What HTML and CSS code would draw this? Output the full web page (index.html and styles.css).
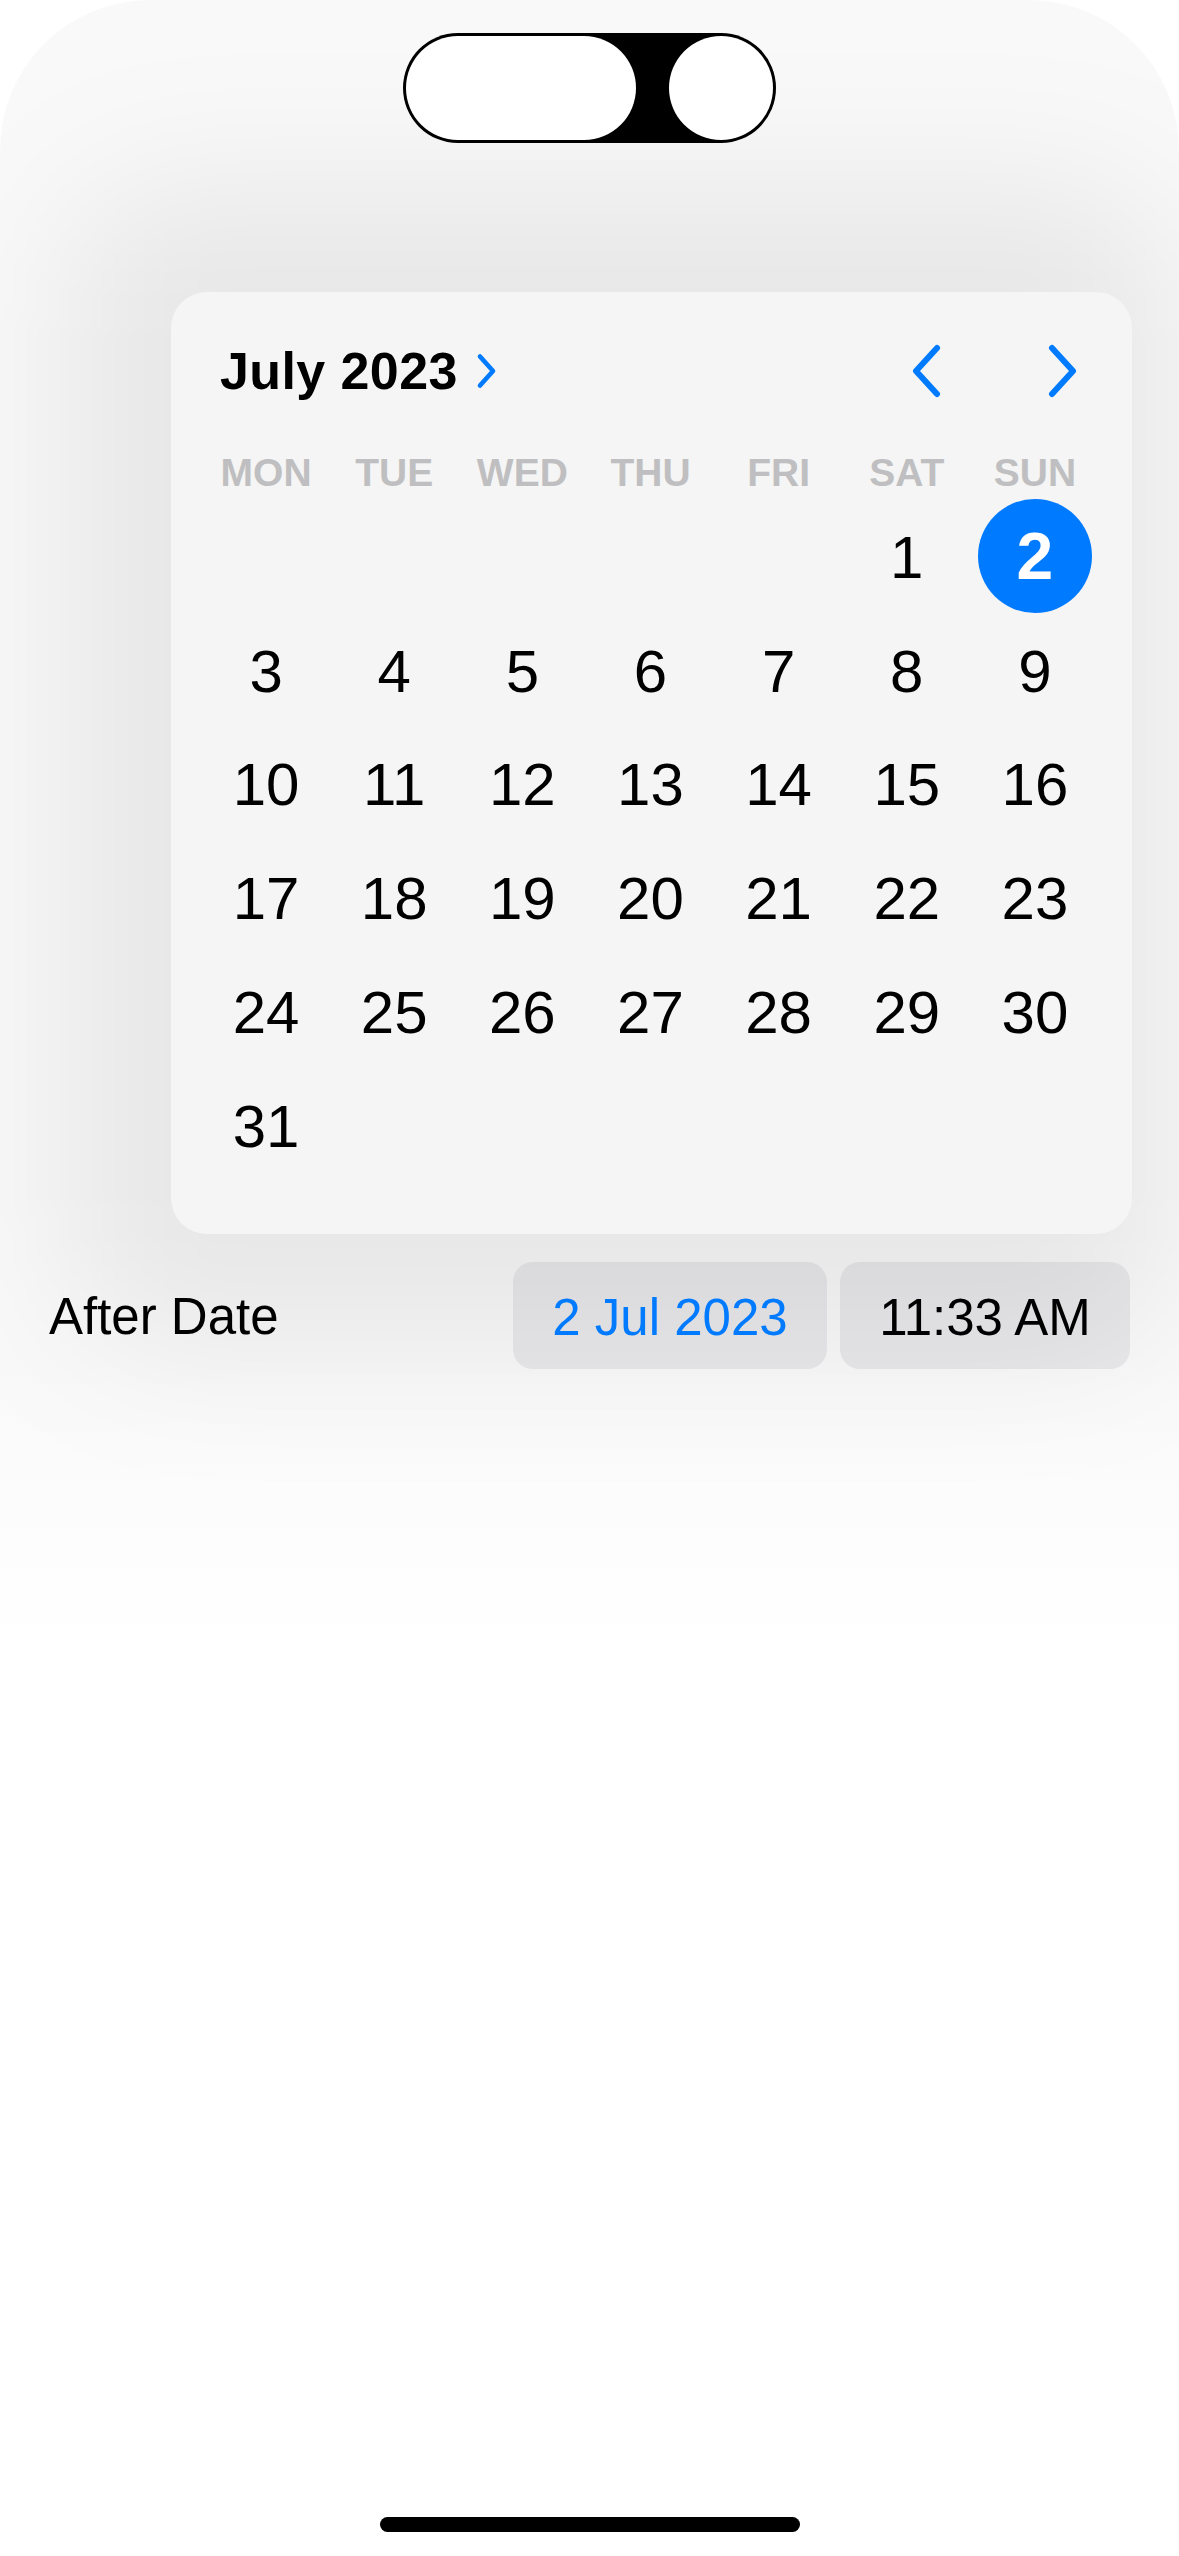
FILE: index.html
```html
<!DOCTYPE html>
<html lang="en">
<head>
<meta charset="utf-8">
<title>Date Picker</title>
<link rel="stylesheet" href="styles.css">
</head>
<body>
<div class="screen">
  <div class="halo"><div class="halo-core"></div></div>

  <div class="island"><span class="island-pill"></span><span class="island-dot"></span></div>

  <section class="card">
    <header class="cal-head">
      <span class="month">July 2023</span>
      <svg class="month-chev" width="22" height="36" viewBox="0 0 22 36"><path d="M4 3.5 L17 18 L4 32.5" fill="none" stroke="#007aff" stroke-width="4.6" stroke-linecap="round" stroke-linejoin="round"/></svg>
      <div class="nav">
        <svg class="nav-chev" width="32" height="54" viewBox="0 0 32 54"><path d="M27 4 L6 27 L27 50" fill="none" stroke="#007aff" stroke-width="6" stroke-linecap="round" stroke-linejoin="round"/></svg>
        <svg class="nav-chev" width="32" height="54" viewBox="0 0 32 54"><path d="M5 4 L26 27 L5 50" fill="none" stroke="#007aff" stroke-width="6" stroke-linecap="round" stroke-linejoin="round"/></svg>
      </div>
    </header>

    <div class="weekdays">
      <span>MON</span><span>TUE</span><span>WED</span><span>THU</span><span>FRI</span><span>SAT</span><span>SUN</span>
    </div>

    <div class="days">
      <span class="day"></span><span class="day"></span><span class="day"></span><span class="day"></span><span class="day"></span>
      <span class="day">1</span>
      <span class="day"><span class="selected">2</span></span>
      <span class="day">3</span><span class="day">4</span><span class="day">5</span><span class="day">6</span><span class="day">7</span><span class="day">8</span><span class="day">9</span>
      <span class="day">10</span><span class="day">11</span><span class="day">12</span><span class="day">13</span><span class="day">14</span><span class="day">15</span><span class="day">16</span>
      <span class="day">17</span><span class="day">18</span><span class="day">19</span><span class="day">20</span><span class="day">21</span><span class="day">22</span><span class="day">23</span>
      <span class="day">24</span><span class="day">25</span><span class="day">26</span><span class="day">27</span><span class="day">28</span><span class="day">29</span><span class="day">30</span>
      <span class="day">31</span>
    </div>
  </section>

  <div class="row">
    <span class="label">After Date</span>
    <div class="pickers">
      <span class="pill date">2 Jul 2023</span>
      <span class="pill time">11:33 AM</span>
    </div>
  </div>

  <div class="home"></div>
</div>
</body>
</html>
```

FILE: styles.css
```css
* { box-sizing: border-box; }

html, body {
  margin: 0;
  padding: 0;
  background: #ffffff;
}

body {
  font-family: "Liberation Sans", Arial, sans-serif;
  color: #000;
}

.screen {
  position: relative;
  isolation: isolate;
  width: 1179px;
  height: 2556px;
  overflow: hidden;
  background: #ffffff;
  display: flex;
  flex-direction: column;
}

/* soft backdrop shadow around the popover */
.halo {
  position: absolute;
  left: 0;
  top: 0;
  width: 1179px;
  height: 1660px;
  z-index: -1;
  overflow: hidden;
  border-radius: 150px 150px 0 0;
  background: linear-gradient(to bottom, rgba(0,0,0,0.022) 0, rgba(0,0,0,0.022) 1360px, rgba(0,0,0,0) 1650px);
}

.halo-core {
  position: absolute;
  left: 64px;
  right: 6px;
  top: 187px;
  height: 1160px;
  border-radius: 100px;
  background: rgba(0,0,0,0.072);
  filter: blur(75px);
}

/* dynamic island */
.island {
  align-self: center;
  margin-top: 33px;
  width: 373px;
  height: 110px;
  padding: 3px;
  background: #000;
  border-radius: 55px;
  display: flex;
  gap: 33px;
}

.island-pill {
  width: 230px;
  height: 104px;
  background: #fff;
  border-radius: 52px;
}

.island-dot {
  width: 104px;
  height: 104px;
  background: #fff;
  border-radius: 50%;
}

/* calendar card */
.card {
  margin: 149px 47px 0 171px;
  padding: 49px 33px 50px 31px;
  background: #f4f5f4;
  border-radius: 36px;
}

.cal-head {
  display: flex;
  align-items: center;
  height: 60px;
  padding: 0 20px 0 18px;
}

.month {
  font-size: 52px;
  line-height: 60px;
  font-weight: 700;
  letter-spacing: 0.4px;
  color: #000;
}

.month-chev {
  margin-left: 18px;
  display: block;
}

.nav {
  margin-left: auto;
  display: flex;
  align-items: center;
  gap: 105px;
}

.nav-chev {
  display: block;
}

.weekdays {
  margin-top: 52px;
  display: grid;
  grid-template-columns: repeat(7, 1fr);
  font-size: 39px;
  line-height: 39px;
  font-weight: 700;
  color: #bfbfc1;
  text-align: center;
}

.days {
  margin-top: 9px;
  display: grid;
  grid-template-columns: repeat(7, 1fr);
  grid-auto-rows: 113.8px;
}

.day {
  display: flex;
  align-items: center;
  justify-content: center;
  font-size: 60px;
  line-height: 60px;
  color: #000;
}

.selected {
  width: 114px;
  height: 114px;
  flex: 0 0 114px;
  border-radius: 50%;
  background: #007aff;
  color: #fff;
  font-weight: 700;
  font-size: 66px;
  display: flex;
  align-items: center;
  justify-content: center;
  margin-top: -4px;
}

/* after date row */
.row {
  margin-top: 28px;
  padding: 0 49px;
  display: flex;
  align-items: center;
  height: 107px;
}

.label {
  font-size: 51px;
  line-height: 60px;
  padding-top: 3px;
}

.pickers {
  margin-left: auto;
  display: flex;
  gap: 13px;
}

.pill {
  height: 107px;
  line-height: 107px;
  padding-top: 2px;
  font-size: 51px;
  border-radius: 20px;
  background: rgba(118,118,128,0.12);
  white-space: nowrap;
  text-align: center;
}

.pill.date {
  width: 314px;
  color: #007aff;
}

.pill.time {
  width: 290px;
  color: #000;
}

/* home indicator */
.home {
  align-self: center;
  margin-top: auto;
  margin-bottom: 24px;
  width: 420px;
  height: 15px;
  border-radius: 8px;
  background: #000;
}
```
